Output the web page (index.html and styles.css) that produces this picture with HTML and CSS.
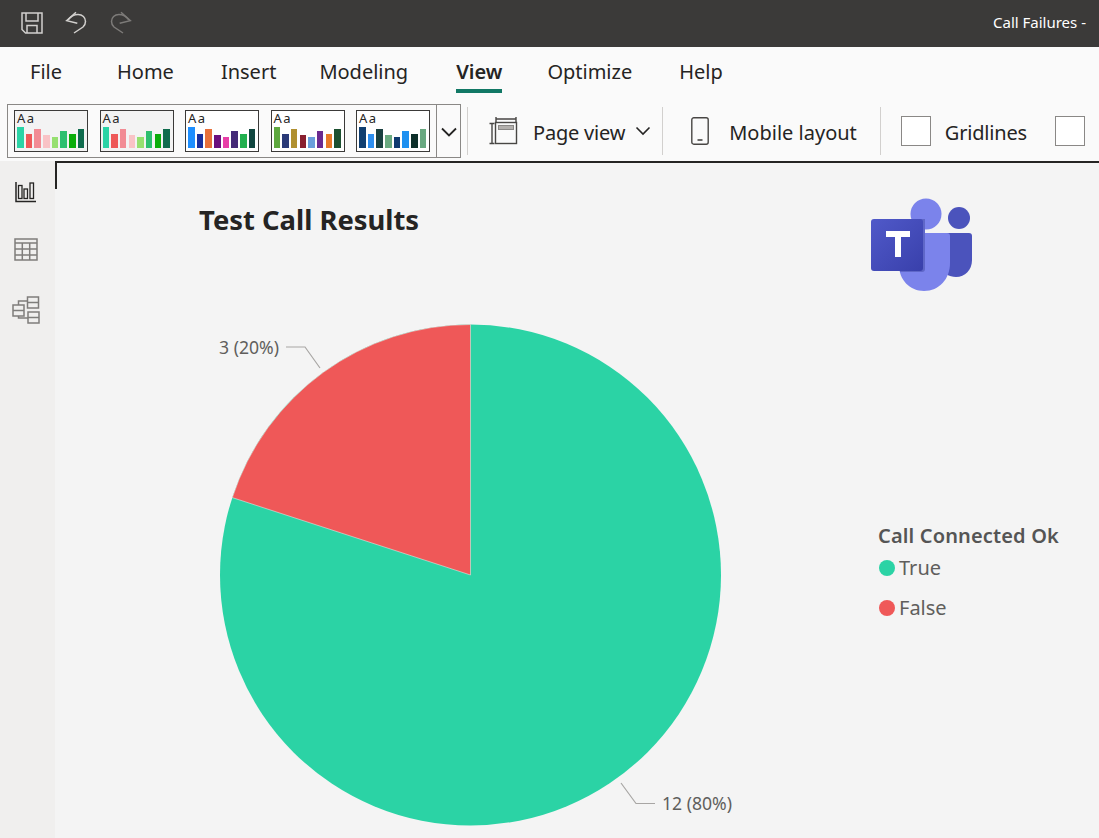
FILE: index.html
```html
<!DOCTYPE html>
<html lang="en">
<head>
  <meta charset="UTF-8">
  <title>Call Failures</title>
  <link rel="stylesheet" href="styles.css">
</head>
<body>

  <header class="titlebar">
    <div class="quick-tools">
      <svg class="qa-icon" width="24" height="24" viewBox="0 0 24 24" fill="none" stroke="#d2d0ce" stroke-width="1.5">
        <path d="M2 2h20v20H5.500L2 18.500z"/>
        <path d="M6 2v8h12V2"/>
        <path d="M7 22v-7.500h10V22"/>
      </svg>
      <svg class="qa-icon" width="24" height="24" viewBox="0 0 24 24" fill="none" stroke="#d2d0ce" stroke-width="1.5">
        <path d="M11 1.300 1.700 9.700 12.300 12.300"/>
        <path d="M3 9C6 5 9 3.500 13 3.500c4.500 0 7.500 3 7.500 7 0 2.500-1 4-2.500 5.500l-9 6"/>
      </svg>
      <svg class="qa-icon" width="24" height="24" viewBox="0 0 24 24" fill="none" stroke="#7d7b79" stroke-width="1.5">
        <g transform="matrix(-1 0 0 1 22 0)">
          <path d="M11 1.300 1.700 9.700 12.300 12.300"/>
          <path d="M3 9C6 5 9 3.500 13 3.500c4.500 0 7.500 3 7.500 7 0 2.500-1 4-2.500 5.500l-9 6"/>
        </g>
      </svg>
    </div>
    <div class="doc-title">Call Failures -</div>
  </header>

  <nav class="tabs">
    <a class="tab tab-file">File</a>
    <a class="tab">Home</a>
    <a class="tab tab-insert">Insert</a>
    <a class="tab tab-modeling">Modeling</a>
    <a class="tab active">View</a>
    <a class="tab">Optimize</a>
    <a class="tab">Help</a>
  </nav>

  <section class="ribbon">
    <div class="gallery">
      <div id="themes" class="themes"></div>
      <div class="gallery-more">
        <svg width="16" height="10" viewBox="0 0 16 10" fill="none" stroke="#252423" stroke-width="1.800"><path d="M1 1.500 8 8.500 15 1.500"/></svg>
      </div>
    </div>
    <div class="sep sep-first"></div>
    <button class="rb-btn btn-page">
      <svg width="30" height="30" viewBox="0 0 30 30" fill="none" stroke="#484644" stroke-width="1.400">
        <path d="M0.500 7.500h5M0.500 27.500h5M3 7.500v20"/>
        <path d="M7 1v5M27 1v5M7 3h20"/>
        <rect x="6.500" y="6.500" width="21" height="21"/>
        <rect x="9.500" y="9.500" width="15" height="4" fill="#b3b0ad" stroke="#8a8886" stroke-width="1"/>
      </svg>
      <span class="rb-label">Page view</span>
      <svg class="chev" width="16" height="10" viewBox="0 0 16 10" fill="none" stroke="#252423" stroke-width="1.600"><path d="M1.500 1.500 8 8 14.500 1.500"/></svg>
    </button>
    <div class="sep sep-page"></div>
    <button class="rb-btn btn-mobile">
      <svg width="18" height="28" viewBox="0 0 18 28" fill="none" stroke="#484644" stroke-width="1.400">
        <rect x="0.800" y="0.800" width="16.400" height="26.400" rx="2"/>
        <path d="M6.500 23h5" stroke-width="1.600"/>
      </svg>
      <span class="rb-label label-mobile">Mobile layout</span>
    </button>
    <div class="sep sep-mobile"></div>
    <label class="check-item"><span class="box"></span><span class="rb-label">Gridlines</span></label>
    <label class="check-item"><span class="box"></span></label>
  </section>

  <main class="workspace">
    <aside class="sidebar">
      <svg class="side-icon" width="22" height="22" viewBox="0 0 22 22" fill="none" stroke="#252423" stroke-width="1.300">
        <path d="M1 1v19.500h20" stroke-width="1.500"/>
        <rect x="3.500" y="4.500" width="3.500" height="13"/>
        <rect x="9" y="8" width="3.500" height="9.500"/>
        <rect x="15" y="2" width="3.500" height="15.500"/>
      </svg>
      <svg class="side-icon" width="24" height="24" viewBox="0 0 24 24" fill="none" stroke="#7f7d7b" stroke-width="1.500">
        <rect x="1" y="1" width="22" height="21"/>
        <path d="M1 5h22M1 11h22M1 17h22M8.300 5v17M15.700 5v17"/>
      </svg>
      <svg class="side-icon" width="28" height="28" viewBox="0 0 28 28" fill="none" stroke="#7f7d7b" stroke-width="1.500">
        <rect x="1" y="9" width="11" height="11"/>
        <path d="M1 14.500h11"/>
        <rect x="15.500" y="1" width="11" height="11"/>
        <path d="M15.500 6.500h11"/>
        <rect x="16" y="16" width="11" height="11"/>
        <path d="M16 21.500h11"/>
        <path d="M6.500 9V5h9M6.500 20v2h9.500"/>
      </svg>
    </aside>

    <div class="canvas">
      <div class="chart-col">
        <h1 class="chart-title">Test Call Results</h1>
        <svg class="pie" width="745" height="538" viewBox="55 300 745 538">
          <circle cx="470.500" cy="575" r="250.500" fill="#2bd3a5"/>
          <path d="M470.500 575V324.500A250.500 250.500 0 0 0 232.300 497.600Z" fill="#ef5858" stroke="#f4f4f4" stroke-width="0.500"/>
          <path class="leader" d="M286 347h19l15 21"/>
          <path class="leader" d="M621 783l15 20.500h19"/>
          <text class="data-label" x="219" y="354">3 (20%)</text>
          <text class="data-label" x="662" y="809.500">12 (80%)</text>
        </svg>
      </div>
      <div class="side-col">
        <svg class="teams-logo" width="104" height="96" viewBox="0 0 104 96">
          <defs>
            <linearGradient id="teamsT" x1="0" y1="0" x2="1" y2="1">
              <stop offset="0" stop-color="#5059c9"/>
              <stop offset="1" stop-color="#3940ab"/>
            </linearGradient>
          </defs>
          <circle cx="56" cy="17" r="15.500" fill="#7b83eb"/>
          <circle cx="89" cy="21" r="11" fill="#4b53bc"/>
          <path d="M70 36h29a3 3 0 0 1 3 3v24c0 10-7 17-16 17-7 0-13-4-16-10z" fill="#4b53bc"/>
          <path d="M30 36h47a3 3 0 0 1 3 3v27c0 16-11 28-26 28-14 0-25-11-25-26V36z" fill="#7b83eb"/>
          <path d="M42 22h13v50a3 3 0 0 1-3 3H30l-1-38z" fill="#5f67c8"/>
          <rect x="1" y="22" width="52" height="52" rx="3" fill="url(#teamsT)"/>
          <path d="M16 34h24v6h-9v20h-6V40h-9z" fill="#fff"/>
        </svg>
        <div class="legend">
          <div class="legend-title">Call Connected Ok</div>
          <div class="legend-item"><span class="dot dot-true"></span>True</div>
          <div class="legend-item"><span class="dot dot-false"></span>False</div>
        </div>
      </div>
    </div>
  </main>

  <script src="script.js"></script>
</body>
</html>
```

FILE: styles.css
```css
* {
  box-sizing: border-box;
}

html, body {
  margin: 0;
  height: 838px;
  overflow: hidden;
}

body {
  font-family: "Noto Sans", "Open Sans", sans-serif;
  background: #f4f4f4;
  color: #252423;
}

.titlebar {
  height: 47px;
  background: #3b3a39;
  display: flex;
  align-items: center;
  justify-content: space-between;
  padding: 0 13px 2px 20px;
}

.quick-tools {
  display: flex;
  gap: 21px;
}

.doc-title {
  color: #fff;
  font-size: 15px;
  margin-bottom: 2px;
}

.tabs {
  height: 53px;
  background: #fafafa;
  display: flex;
  padding-left: 30px;
}

.tab {
  font-size: 20px;
  line-height: 50px;
  height: 46px;
  margin-right: 47px;
}

.tab-file {
  margin-right: 55px;
}

.tab-insert {
  margin-right: 43px;
}

.tab-modeling {
  margin-right: 48px;
}

.tab.active {
  font-weight: 600;
  border-bottom: 4px solid #117865;
  margin-right: 45px;
}

.ribbon {
  height: 61px;
  background: #fafafa;
  display: flex;
  align-items: center;
  padding: 1px 0 0 7px;
  white-space: nowrap;
}

.gallery {
  width: 454px;
  height: 54px;
  flex: none;
  border: 1px solid #8a8886;
  display: flex;
  background: #fafafa;
}

.themes {
  width: 428px;
  padding: 5px 0 0 6px;
  display: flex;
  gap: 11.500px;
}

.theme {
  width: 74px;
  height: 42px;
  flex: none;
  border: 1px solid #3b3a39;
  background: #fff;
  padding-left: 2px;
}

.theme-grey {
  background: #f3f3f3;
}

.theme-aa {
  font-size: 13px;
  line-height: 14px;
  letter-spacing: 1.500px;
  color: #252423;
  display: block;
}

.theme-bars {
  display: flex;
  align-items: flex-end;
  gap: 2.200px;
  height: 23px;
}

.theme-bars span {
  width: 6.500px;
  display: block;
}

.gallery-more {
  width: 24px;
  border-left: 1px solid #8a8886;
  display: flex;
  align-items: center;
  justify-content: center;
  padding-top: 2px;
}

.sep {
  width: 1px;
  height: 48px;
  background: #d2d0ce;
  flex: none;
}

.sep-first {
  margin-left: 6px;
}

.sep-page {
  margin-left: 11px;
}

.sep-mobile {
  margin-left: 23px;
}

.rb-btn {
  background: none;
  border: none;
  padding: 0;
  font: inherit;
  font-size: 20px;
  color: #252423;
  display: flex;
  align-items: center;
  flex: none;
}

.rb-label {
  padding-top: 2px;
  letter-spacing: -0.200px;
}

.label-mobile {
  letter-spacing: 0;
}

.btn-page {
  margin-left: 21px;
  gap: 14px;
}

.btn-page .chev {
  margin-left: -4px;
}

.btn-mobile {
  margin-left: 28px;
  gap: 20px;
}

.check-item {
  display: flex;
  align-items: center;
  gap: 14px;
  font-size: 20px;
  margin-left: 20px;
  flex: none;
}

.check-item + .check-item {
  margin-left: 28px;
}

.box {
  width: 30px;
  height: 30px;
  border: 1px solid #8a8886;
  background: #fff;
  display: block;
}

.workspace {
  height: 677px;
  display: flex;
}

.sidebar {
  width: 55px;
  flex: none;
  background: #f0efee;
  display: flex;
  flex-direction: column;
  align-items: center;
  padding-top: 20px;
}

.side-icon:nth-child(1) {
  margin: 0 3px 0 0;
}

.side-icon:nth-child(2) {
  margin: 35px 4px 0 0;
}

.side-icon:nth-child(3) {
  margin: 34px 3px 0 0;
}

.canvas {
  flex: 1;
  display: flex;
  background: #f4f4f4;
  border-top: 2px solid #252423;
  position: relative;
}

/* small corner tick of the report page */
.canvas::before {
  content: "";
  position: absolute;
  left: 0;
  top: 0;
  width: 2px;
  height: 26px;
  background: #252423;
}

.chart-col {
  width: 745px;
  flex: none;
}

.chart-title {
  height: 137px;
  margin: 0;
  padding: 37px 0 0 144px;
  font-size: 27.400px;
  line-height: 40px;
  font-weight: 700;
  color: #252423;
}

.pie {
  display: block;
}

.leader {
  fill: none;
  stroke: #a8a6a4;
  stroke-width: 1.200;
}

.data-label {
  font-size: 17.600px;
  fill: #605e5c;
}

.side-col {
  flex: 1;
  padding: 34px 0 0 70px;
}

.teams-logo {
  display: block;
  margin-bottom: 228px;
}

.legend {
  color: #605e5c;
  font-size: 20px;
  margin-left: 8px;
}

.legend-title {
  font-weight: 600;
  line-height: 30px;
  letter-spacing: 0.150px;
  color: #555;
  white-space: nowrap;
  margin-bottom: 2px;
}

.legend-item {
  display: flex;
  align-items: center;
  gap: 4px;
  line-height: 30px;
  margin-bottom: 10px;
}

.dot {
  width: 16px;
  height: 16px;
  border-radius: 50%;
  margin-left: 1px;
}

.dot-true {
  background: #2bd3a5;
}

.dot-false {
  background: #ef5858;
}
```

FILE: script.js
```js
const heights = [21, 14, 19, 13, 11, 17, 14, 19];

const themes = [
  { grey: true, colors: ["#2bd3a5", "#ee5858", "#f28b94", "#f9c3c6", "#96e070", "#2dbf6f", "#0aad0a", "#0f6b4d"] },
  { grey: true, colors: ["#2bd3a5", "#ee5858", "#f28b94", "#f9c3c6", "#96e070", "#2dbf6f", "#0aad0a", "#0f6b4d"] },
  { grey: false, colors: ["#1e8fff", "#1a2f9c", "#e8703a", "#6b0f7e", "#e83fa8", "#452a78", "#22b04f", "#10463f"] },
  { grey: false, colors: ["#5ea83f", "#2a3a78", "#b09030", "#8a2030", "#6a9fdc", "#6a2a90", "#e87a28", "#1c5030"] },
  { grey: false, colors: ["#103f70", "#2e8ff0", "#1a4040", "#6aaa80", "#0f3a70", "#1e90f0", "#0d2f2a", "#68a880"] }
];

function renderTheme(theme) {
  const box = document.createElement("div");
  box.className = theme.grey ? "theme theme-grey" : "theme";

  const aa = document.createElement("span");
  aa.className = "theme-aa";
  aa.textContent = "Aa";
  box.appendChild(aa);

  const bars = document.createElement("div");
  bars.className = "theme-bars";
  theme.colors.forEach((color, i) => {
    const bar = document.createElement("span");
    bar.style.height = heights[i] + "px";
    bar.style.background = color;
    bars.appendChild(bar);
  });
  box.appendChild(bars);

  document.getElementById("themes").appendChild(box);
}

themes.forEach(renderTheme);
```
